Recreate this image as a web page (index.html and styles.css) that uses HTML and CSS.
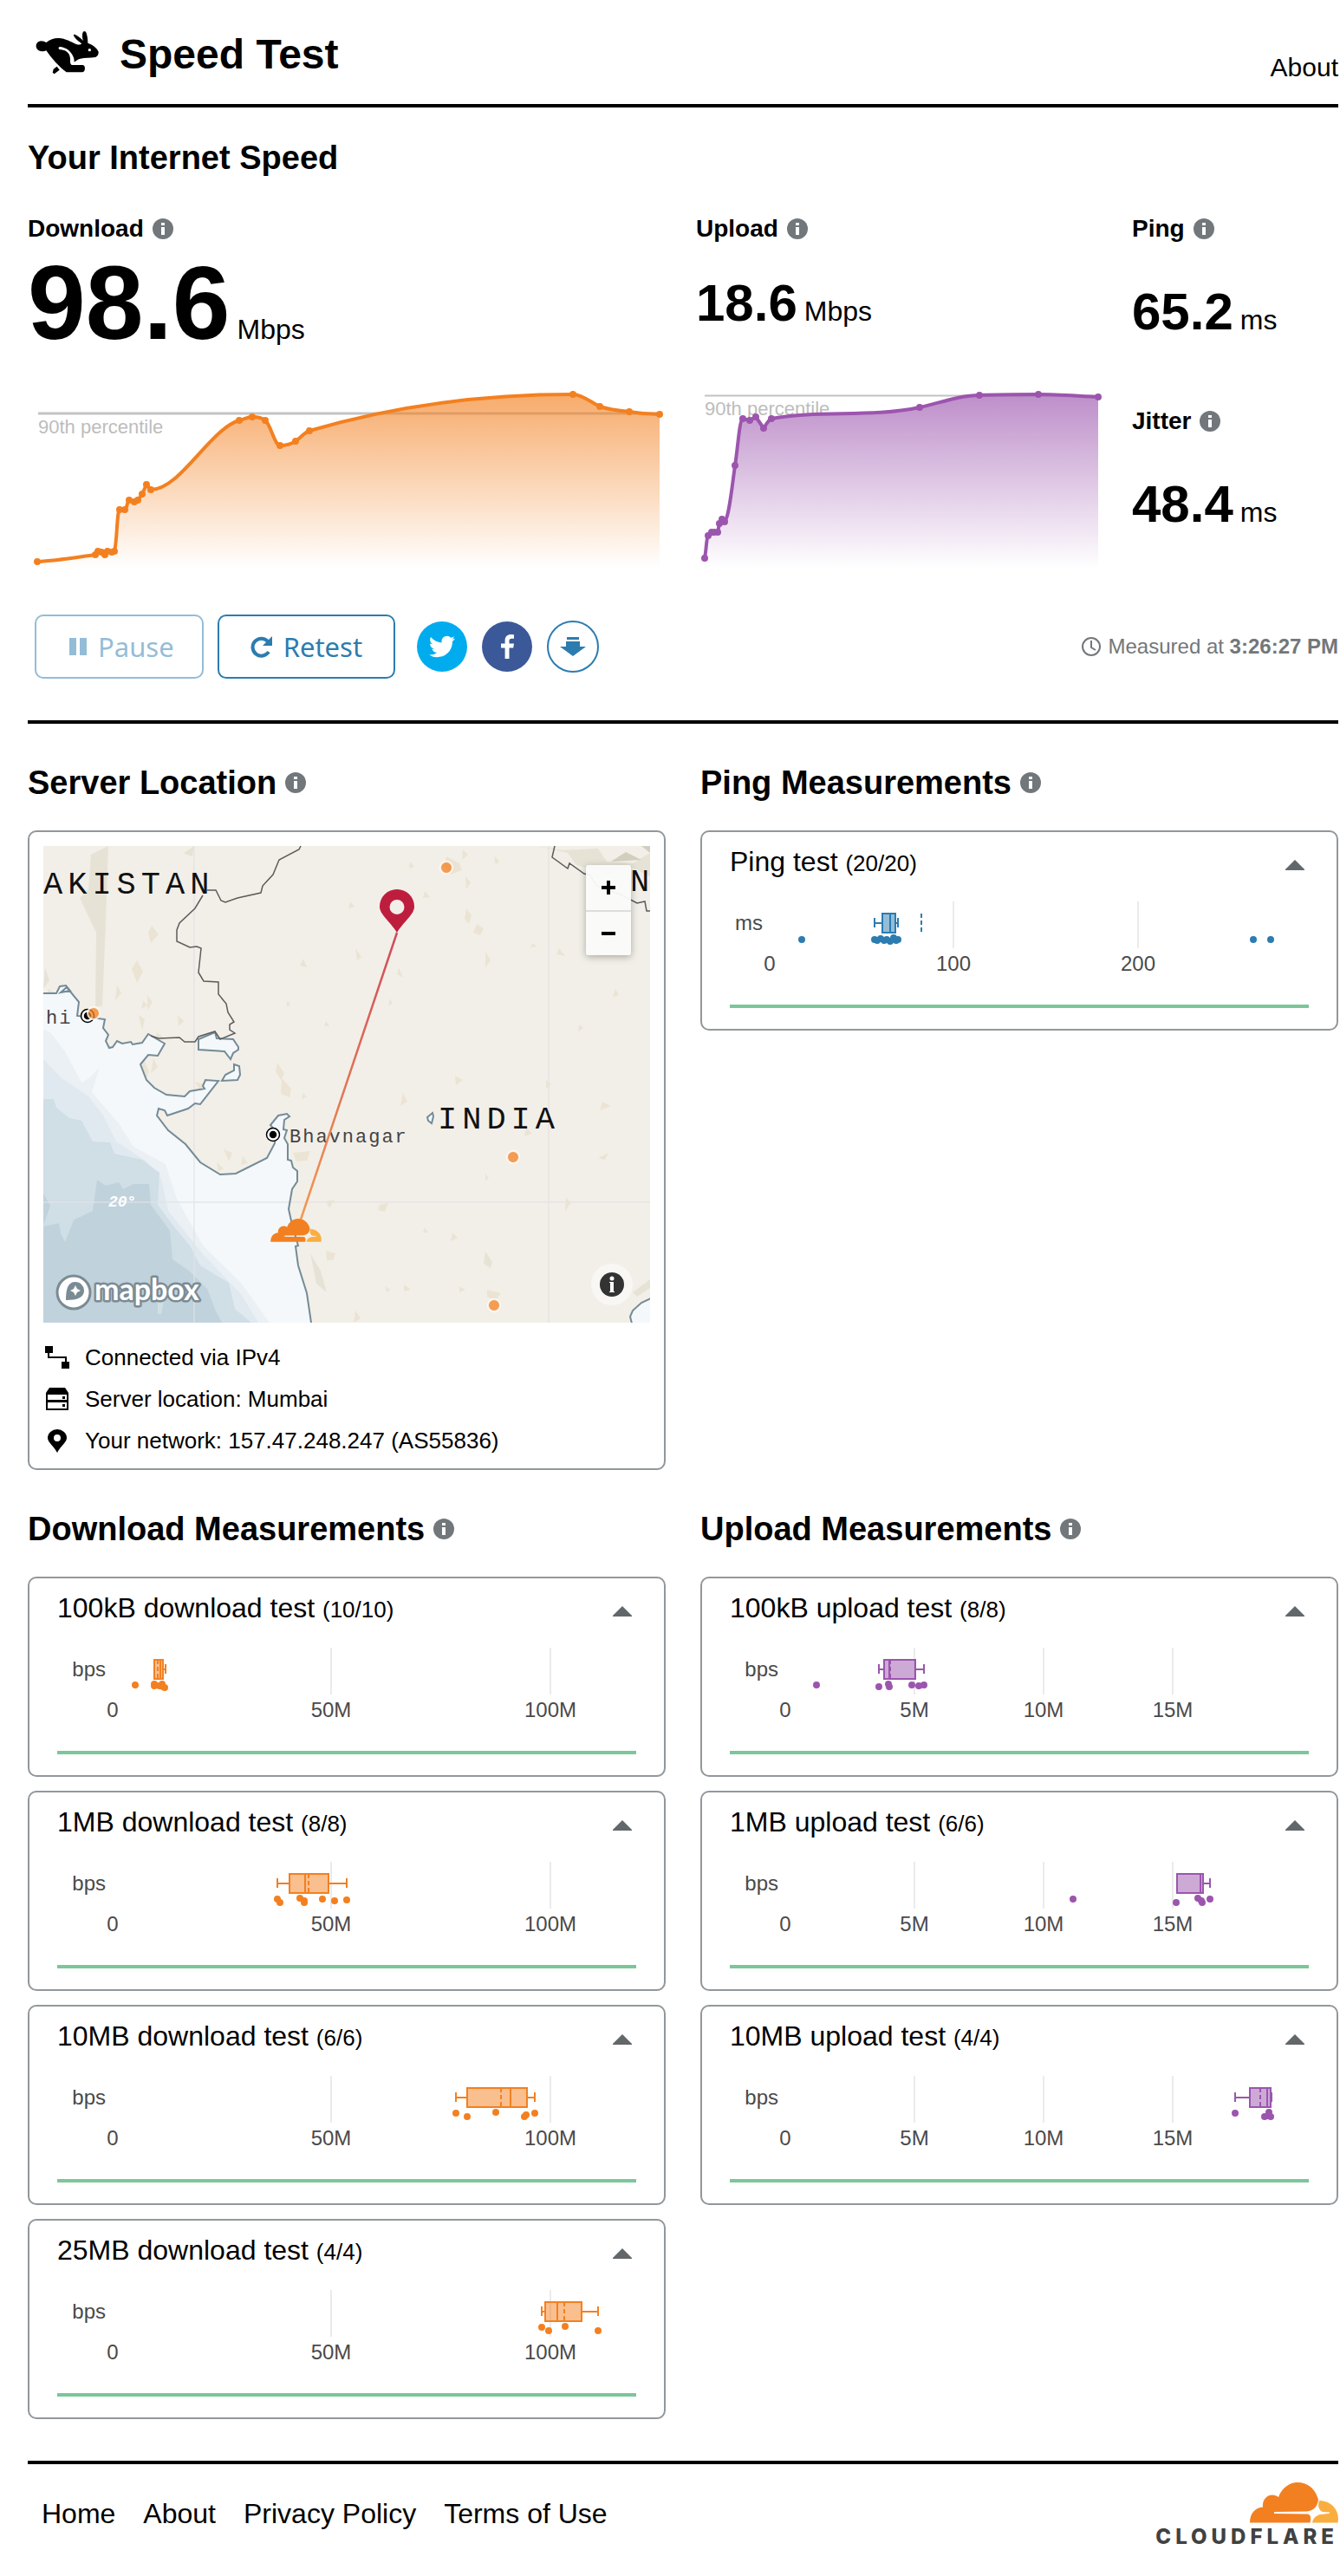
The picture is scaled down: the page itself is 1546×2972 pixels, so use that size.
FILE: index.html
```html
<!DOCTYPE html>
<html lang="en">
<head>
<meta charset="utf-8">
<meta name="viewport" content="width=device-width, initial-scale=1">
<title>Speed Test</title>
<link rel="stylesheet" href="styles.css">
</head>
<body>
<svg class="defs" aria-hidden="true">
  <symbol id="i-info" viewBox="0 0 24 24"><circle cx="12" cy="12" r="12" fill="#72777b"/><path d="M10 5h4v3h-4zM10 10h4v9h-4z" fill="#fff"/></symbol>
  <symbol id="i-up" viewBox="0 0 22 12"><path d="M11 0L22 11V12H0V11Z" fill="#62676a"/></symbol>
  <symbol id="i-cloud" viewBox="0 0 102 47">
    <path fill="#f38020" d="M0 46.500C0 36 6 29 15 28.500C14 21 19 14.600 26 14.600C29 14.600 31 15.500 33 17C37 6 46 0 55 0C66 0 75 7 78 17L79 20C78 27 75 32 66 33.500L28 34V36L66 36.500C70 37 71 40 69.500 46.500Z"/>
    <path fill="#faae40" d="M80 21C92 21 102 30 102 42L101.500 46.500H72C73 41 77 38 81 37L92 35.800V34.600L84 34C79 32 78 26 80 21Z"/>
  </symbol>
</svg>

<header class="header">
  <div class="brand">
    <svg class="rabbit" viewBox="0 0 252 180" aria-hidden="true">
      <path d="M34 49C42 49 48 52 52 54C66 42 82 38 96 39C118 40 138 52 156 60C164 63 171 62 175 58C163 50 150 38 147 30C146 26 150 25 154 28C164 33 174 42 180 48C176 36 176 22 180 17C184 13 189 16 191 22C195 34 196 46 196 56C214 62 226 72 232 84C235 92 231 102 222 105C204 108 186 106 170 110C160 113 154 118 149 122C150 104 138 86 122 76C112 70 98 66 95 71C93 76 98 79 104 79C122 81 134 92 135 110C135 120 134 130 142 132H178C186 133 188 144 184 152C182 156 178 157 174 157H122C96 138 70 108 52 82C44 86 34 86 26 82C12 74 14 50 34 49Z"/>
      <path d="M77 146L89 137L98 149L80 163L74 158Z"/><circle cx="202" cy="80" r="5" fill="#fff"/>
    </svg>
    <h1>Speed Test</h1>
  </div>
  <a class="about" href="#about">About</a>
</header>

<main>
<section class="overview">
  <h2>Your Internet Speed</h2>
  <div class="stats">
    <div class="stat">
      <h3>Download <button class="info" aria-label="About download speed"><svg><use href="#i-info"/></svg></button></h3>
      <p class="value value-xl"><strong>98.6</strong><span>Mbps</span></p>
      <svg class="trend" viewBox="0 0 771 210" role="img" aria-label="Download speed over time">
        <defs><linearGradient id="go" x1="0" y1="0" x2="0" y2="1"><stop offset="0" stop-color="#f38020" stop-opacity=".66"/><stop offset="1" stop-color="#f38020" stop-opacity="0"/></linearGradient></defs>
        <path d="M12 27H729" stroke="#c3c3c3" stroke-width="3"/>
        <text x="12" y="50">90th percentile</text>
        <path fill="url(#go)" d="M11 198C34 197 56 193 78 190L81 186L85 187L89 190L92 186L97 187L100 186L106 138L112 138L117 127L123 129L127 127L132 120L137 109L142 115C176 115 210 45 244 35C249 34 254 31 259 31C264 31 269 31 274 35C280 39 285 64 291 64C297 64 303 63 309 59C314 56 319 49 325 47C426 17 527 5 629 5C639 5 650 14 660 19C672 23 683 24 694 25C706 27 717 28 729 28V206H11Z"/>
        <path class="line orange" d="M11 198C34 197 56 193 78 190L81 186L85 187L89 190L92 186L97 187L100 186C103 176 103 138 106 138L112 138C115 136 115 127 117 127L123 129L127 127L132 120L137 109L142 115C176 115 210 45 244 35C249 34 254 31 259 31C264 31 269 31 274 35C280 39 285 64 291 64C297 64 303 63 309 59C314 56 319 49 325 47C426 17 527 5 629 5C639 5 650 14 660 19C672 23 683 24 694 25C706 27 717 28 729 28"/>
        <path class="points orange" d="M11 198h0M78 190h0M81 186h0M85 187h0M89 190h0M92 186h0M97 187h0M100 186h0M106 138h0M112 138h0M117 127h0M123 129h0M127 127h0M132 120h0M137 109h0M142 115h0M244 35h0M259 31h0M274 35h0M291 64h0M309 59h0M325 47h0M629 5h0M660 19h0M694 25h0M729 28h0"/>
      </svg>
    </div>
    <div class="stat">
      <h3>Upload <button class="info" aria-label="About upload speed"><svg><use href="#i-info"/></svg></button></h3>
      <p class="value value-up"><strong>18.6</strong><span>Mbps</span></p>
      <svg class="trend" viewBox="0 0 503 210" role="img" aria-label="Upload speed over time">
        <defs><linearGradient id="gp" x1="0" y1="0" x2="0" y2="1"><stop offset="0" stop-color="#9c55ae" stop-opacity=".66"/><stop offset="1" stop-color="#9c55ae" stop-opacity="0"/></linearGradient></defs>
        <path d="M10 6.500H464" stroke="#c3c3c3" stroke-width="2"/>
        <text x="10" y="29">90th percentile</text>
        <path fill="url(#gp)" d="M10 194L14 168L18 164H25L27 154L30 149L33 152C38 148 42 108 45 87C48 70 51 34 54 33L62 35L69 31L78 44L87 33C144 23 201 32 258 20C281 15 304 6 327 6C350 5 372 5 395 5C418 5 441 7 464 8V206H10Z"/>
        <path class="line purple" d="M10 194C12 184 12 170 14 168L18 164H25L27 154L30 149L33 152C38 148 42 108 45 87C48 70 50 34 54 33L62 35C65 35 66 31 69 31L78 44C81 40 83 35 87 33C144 23 201 32 258 20C281 15 304 6 327 6C350 5 372 5 395 5C418 5 441 7 464 8"/>
        <path class="points purple" d="M10 194h0M14 168h0M18 164h0M21 164h0M25 164h0M27 154h0M30 149h0M33 152h0M45 87h0M54 33h0M62 35h0M69 31h0M78 44h0M87 33h0M258 20h0M327 6h0M395 5h0M464 8h0"/>
      </svg>
    </div>
    <div class="stat">
      <h3>Ping <button class="info" aria-label="About ping"><svg><use href="#i-info"/></svg></button></h3>
      <p class="value value-ms"><strong>65.2</strong><span>ms</span></p>
      <h3 class="second">Jitter <button class="info" aria-label="About jitter"><svg><use href="#i-info"/></svg></button></h3>
      <p class="value value-ms"><strong>48.4</strong><span>ms</span></p>
    </div>
  </div>
  <div class="controls">
    <div class="tests">
      <button class="btn" disabled><svg class="ico-pause" viewBox="0 0 20 20"><path d="M0 0h8v20H0zM12 0h8v20h-8z" fill="currentColor"/></svg>Pause</button>
      <button class="btn btn-retest"><svg class="ico-retest" viewBox="0 0 25 25"><path d="M20 6A10 10 0 1 0 21 18" fill="none" stroke="currentColor" stroke-width="4"/><path d="M25 0V11H14Z" fill="currentColor"/></svg>Retest</button>
    </div>
    <div class="share">
      <a class="round twitter" href="#twitter" aria-label="Share on Twitter"><svg width="30" height="30" viewBox="0 0 24 24"><path fill="#fff" d="M23.953 4.570a10 10 0 01-2.825.775 4.958 4.958 0 002.163-2.723c-.951.555-2.005.959-3.127 1.184a4.920 4.920 0 00-8.384 4.482C7.690 8.095 4.067 6.130 1.640 3.162a4.822 4.822 0 00-.666 2.475c0 1.710.870 3.213 2.188 4.096a4.904 4.904 0 01-2.228-.616v.060a4.923 4.923 0 003.946 4.827 4.996 4.996 0 01-2.212.085 4.936 4.936 0 004.604 3.417 9.867 9.867 0 01-6.102 2.105c-.390 0-.779-.023-1.170-.067a13.995 13.995 0 007.557 2.209c9.053 0 13.998-7.496 13.998-13.985 0-.210 0-.420-.015-.630A9.935 9.935 0 0024 4.590z"/></svg></a>
      <a class="round facebook" href="#facebook" aria-label="Share on Facebook"><svg width="15" height="28" viewBox="0 0 15 28"><path fill="#fff" d="M9.500 28V15.500H14.200L15 10.400H9.500V7.600C9.500 5.800 10.200 4.800 12.400 4.800H15V.3C14.300.2 12.900 0 11.400 0 7.400 0 4.600 2.300 4.600 6.900V10.400H0V15.500H4.600V28Z"/></svg></a>
      <button class="round save" aria-label="Download results"><svg width="30" height="22" viewBox="0 0 30 22"><path fill="#2c7cb0" d="M8 0H22V3H8ZM7 5H23V11H30L15 22L0 11H7Z"/></svg></button>
    </div>
    <p class="measured"><svg width="24" height="24" viewBox="0 0 24 24" fill="none" stroke="#72777b" stroke-width="2"><circle cx="12" cy="12" r="10"/><path d="M12 5V13L17 16"/></svg><span>Measured at <strong>3:26:27 PM</strong></span></p>
  </div>
</section>

<div class="columns">
  <section>
    <h2>Server Location <button class="info" aria-label="About server location"><svg><use href="#i-info"/></svg></button></h2>
    <div class="card location">
      <div class="map">
        <svg class="map-art" viewBox="0 0 700 550" role="img" aria-label="Map from your network to Mumbai">
          <defs><linearGradient id="route" gradientUnits="userSpaceOnUse" x1="0" y1="100" x2="0" y2="431"><stop offset="0" stop-color="#cf4a5c"/><stop offset="1" stop-color="#f2994f"/></linearGradient></defs>
          <rect width="700" height="550" fill="#f2efe8"/>
          <g fill="#e6e3d6">
            <path d="M55 10L75 0L72 90L68 185H60L61 100L42 60L52 50Z"/><path d="M2 140L7 155L0 165ZM5 165L20 172L6 180ZM26 165L36 180L22 186ZM35 185L42 215L34 200ZM15 200L20 185L22 200Z"/>
            <path d="M570 0L600 5L640 3L650 18L680 20L700 8V35L680 25L650 33L615 22L605 8Z"/><path d="M655 18L672 7L690 16ZM690 0H700V8Z" fill="#d2cfbe"/>
            <path d="M308 470L320 490L327 515L315 505ZM510 468L518 480L516 487L508 482ZM680 515L700 500V510L685 520Z"/>
            <path d="M162 8L174 0L172 12L165 10Z"/>
          </g>
          <g fill="#ebe4d4">
            <path d="M125 92L133 102L124 112L121 100ZM108 132L115 145L108 158L102 142ZM105 250L115 245L122 260L115 280L108 265ZM110 195L117 200L114 213ZM85 160L90 170L83 178ZM115 178L120 184L113 188ZM130 215L138 220L132 228ZM155 195L162 202L156 208ZM127 245L132 255L124 262ZM120 172L126 180L120 190Z"/>
            <path d="M465 12L480 20L483 28L470 33L462 24ZM487 35L493 42L488 50ZM423 18L428 24L422 26ZM520 12L526 17L522 22ZM484 4L490 10L483 16ZM440 52L446 59L438 60ZM488 72L494 80L491 90L486 84ZM500 90L508 95L504 103L496 100ZM510 122L516 132L510 140ZM360 118L367 128L362 132ZM300 130L304 140L296 138ZM410 140L415 152L408 148ZM354 64L359 70L352 72ZM595 118L602 127L592 125ZM565 112L569 116L562 117Z"/>
            <path d="M270 250L278 262L274 270L268 260ZM275 268L286 280L284 290L274 286ZM175 272L187 275L182 285ZM415 285L420 295L412 300ZM475 265L484 270L476 276ZM660 165L664 172L657 174ZM618 206L623 210L617 214ZM580 270L586 275L580 280ZM645 295L655 300L642 305ZM557 325L564 332L555 335ZM288 354L308 352L304 363L292 364ZM510 378L514 383L510 386ZM388 414L398 412L394 422L386 420ZM326 410L336 408L330 418ZM603 405L608 412L602 422ZM326 467L337 470L334 478H327ZM472 446L478 452L470 456ZM440 440L444 446L438 446ZM512 512L528 516L522 524L512 520ZM360 536L366 545L358 550ZM480 508L487 512L480 515ZM395 508L400 512L396 515ZM416 506L424 512L416 514ZM208 350L218 354L214 364ZM230 358L236 366L228 368ZM200 365L208 372L202 376ZM640 360L652 354L648 362ZM300 285L304 290L298 292ZM282 178L285 184L280 185ZM400 176L403 182L398 184ZM326 202L330 208L324 208Z"/>
          </g>
          <path fill="#f4f8fb" d="M0 170L15 170L19 162L26 161L31 167L41 180L39 196L71 200L69 210L75 218L72 225L76 233L80 232L85 225L91 228L101 226L103 229L114 227L121 217L140 228L132 242L121 241L112 252L119 270L128 279L142 287L163 289L169 283L186 280L184 277L187 270L202 271L181 298L175 297L167 303L143 311L140 305L133 303L131 311L144 328L164 344L181 365L204 379L222 378L258 360L267 343L268 329L262 322L271 311L281 309L284 312L278 316L277 327L281 328L278 337L282 344V362L286 363L288 371L293 375V387L287 396L283 419L287 437L294 461L291 462L294 484L304 516L309 550H0Z"/>
          <path fill="#eaf0f4" d="M0 212L8 215L25 237L44 273L54 267L65 255L56 284L87 320L104 347L141 367L154 407L184 461L228 504L261 550H0Z"/>
          <path fill="#e0e9f0" d="M0 246L20 267L52 289L69 311L84 341L119 364L136 384L144 421L184 471L228 517L248 550H0Z"/>
          <path fill="#d0dee6" d="M0 292H12L15 302L30 314L44 317L57 341L77 342L82 355L114 362L134 377L132 414L149 437L169 461L181 484L214 504L221 534L240 550H0Z"/>
          <path fill="#c0d2dc" d="M0 439L34 432L57 421L62 385L72 392L87 388L92 396L104 390H122L124 414L146 444L149 477L169 491L189 511L199 537L206 550H0ZM0 401L8 415L0 438Z"/>
          <path fill="#d0dee6" d="M18 434L35 432L25 457L20 447ZM132 525H139L136 540H132Z"/>
          <path d="M174 0V550M583 0V550M0 411H700" stroke="#e2e4e4" stroke-width="1.500" opacity=".8"/>
          <g fill="#f4f8fb" stroke="#748b97" stroke-width="2">
            <path fill="none" d="M0 170L15 170L19 162L26 161L31 167L20 169L27 163L41 180L39 196L71 200L69 210L75 218L72 225L76 233L80 232L85 225L91 228L101 226L103 229L114 227L121 217L140 228L132 242L121 241L112 252L119 270L128 279L142 287L163 289L169 283L186 280L184 277L187 270L202 271L181 298L175 297L167 303L143 311L140 305L133 303L131 311L144 328L164 344L181 365L204 379L222 378L258 360L267 343L268 329L262 322L271 311L281 309L284 312L278 316L277 327L281 328L278 337L282 344V362L286 363L288 371L293 375V387L287 396L283 419L287 437L294 461L291 462L294 484L304 516L309 550"/>
            <path d="M179 223L198 215L200 222L219 223L225 232V235L219 239L216 246L209 237L179 235ZM220 252L226 254L227 264L224 270L206 271L210 264L220 259ZM443 313L449 308L450 312L448 320L444 317ZM701 522L690 527L680 536L677 543L679 551H701Z"/>
          </g>
          <path fill="none" stroke="#5c5c5c" stroke-width="1.500" d="M297 0L295 4L272 16L265 33L253 46L251 54L224 60L210 65L205 63L199 51H189M184 57L175 72L157 89L154 97V110L169 117L177 116L182 118L179 146L185 156L202 157V171L211 182L213 192L220 203L215 206V212L221 216L204 223L198 214L179 220L175 226H163L157 221L133 222L124 219M590 0L587 13L605 26L607 20L624 32L631 34L638 46L666 56L685 66L694 64L696 75H700"/>
          <g class="map-country"><text x="0" y="55">AKISTAN</text><text x="455" y="326">INDIA</text><text x="677" y="52">N</text></g>
          <g class="map-city"><text x="284" y="342">Bhavnagar</text><text x="3" y="205">hi</text></g>
          <text class="map-lat" x="75" y="416">20°</text>
          <g stroke="#000" stroke-width="1.500"><circle cx="51" cy="196" r="7.500" fill="#fff"/><circle cx="265" cy="333" r="7.500" fill="#fff"/><circle cx="51" cy="196" r="3.500"/><circle cx="265" cy="333" r="3.500"/></g>
          <g fill="#f38020" fill-opacity=".75" stroke="#fff" stroke-opacity=".8" stroke-width="2"><circle cx="465" cy="25" r="7"/><circle cx="58" cy="193" r="7"/><circle cx="542" cy="359" r="7"/><circle cx="520" cy="530" r="7"/></g>
          <path d="M408 100L297 431" stroke="url(#route)" stroke-width="2.500"/>
          <path fill="#be1e3e" fill-rule="evenodd" d="M408 100C400 87 388 79 388 70A20 20 0 0 1 428 70C428 79 416 87 408 100ZM408 62A8.500 8.500 0 1 0 408 79A8.500 8.500 0 1 0 408 62Z"/>
          <use href="#i-cloud" x="262" y="430" width="59" height="27"/>
          <circle cx="35" cy="515" r="19" fill="#fff" stroke="#7b8b94" stroke-width="3"/>
          <path d="M26 524C26 508 30 503 37 503C43 503 47 508 47 513C47 521 39 524 26 524Z" fill="#7b8b94"/><path d="M37 507L39 511L43 513L39 515L37 519L35 515L31 513L35 511Z" fill="#fff"/>
          <text class="map-logo" x="59" y="524">mapbox</text>
        </svg>
        <div class="zoom"><button aria-label="Zoom in"><svg viewBox="0 0 16 16"><path d="M6 0h4v6h6v4h-6v6H6v-6H0V6h6z"/></svg></button><button aria-label="Zoom out"><svg viewBox="0 0 16 16"><path d="M0 6h16v4H0z"/></svg></button></div>
        <button class="credits" aria-label="Map credits"><svg viewBox="0 0 28 28"><circle cx="14" cy="14" r="14" fill="#333"/><circle cx="14" cy="7" r="2.500" fill="#fff"/><path d="M11 11h5v11h1v1h-6v-1h1v-10h-1z" fill="#fff"/></svg></button>
      </div>
      <ul class="facts">
        <li><svg viewBox="0 0 28 28"><path d="M0 1H9V9H0ZM19 19H28V27H19Z"/><path d="M4 8V14H24V20" fill="none" stroke="#000" stroke-width="2"/></svg>Connected via IPv4</li>
        <li><svg viewBox="0 0 28 28"><path d="M5 1H23L27 7V8H1V7Z"/><path d="M2 8H26V16H2ZM2 17H26V26H2Z" fill="none" stroke="#000" stroke-width="2"/><path d="M20 11h3v3h-3zM20 20h3v3h-3z"/></svg>Server location: Mumbai</li>
        <li><svg viewBox="0 0 28 28"><path fill-rule="evenodd" d="M14 28C10 20 3 16 3 11A11 10 0 0 1 25 11C25 16 18 20 14 28ZM14 7A4 4 0 1 0 14 15A4 4 0 1 0 14 7Z"/></svg>Your network: 157.47.248.247 (AS55836)</li>
      </ul>
    </div>
  </section>

  <section>
    <h2>Ping Measurements <button class="info" aria-label="About ping measurements"><svg><use href="#i-info"/></svg></button></h2>
    <article class="card test blue">
      <div class="test-head"><h3>Ping test <small>(20/20)</small></h3><button class="toggle" aria-label="Collapse"><svg><use href="#i-up"/></svg></button></div>
      <svg class="box" viewBox="0 0 668 92" role="img" aria-label="Ping box plot">
        <path class="gridline" d="M258 4V58M471 4V58"/><text x="38" y="37" text-anchor="end">ms</text>
        <g text-anchor="middle"><text x="46" y="84">0</text><text x="258" y="84">100</text><text x="471" y="84">200</text></g>
        <rect x="176" y="18" width="15" height="22"/><path class="rule" d="M167 23V34M167 29H176M191 29H194M194 23V34M185 18V40"/><path class="mean" d="M221 18V40"/>
        <path class="dots" d="M83 48h0M167 48h0M170 49h0M174 47h0M178 49h0M181 48h0M185 50h0M189 46h0M192 49h0M194 48h0M604 48h0M624 48h0"/>
      </svg>
      <div class="done"></div>
    </article>
  </section>
</div>

<div class="columns">
  <section>
    <h2>Download Measurements <button class="info" aria-label="About download measurements"><svg><use href="#i-info"/></svg></button></h2>
    <div class="stack">
    <article class="card test tangerine">
      <div class="test-head"><h3>100kB download test <small>(10/10)</small></h3><button class="toggle" aria-label="Collapse"><svg><use href="#i-up"/></svg></button></div>
      <svg class="box" viewBox="0 0 668 92" role="img" aria-label="100kB download box plot">
        <path class="gridline" d="M316 4V58M569 4V58"/><text x="56" y="37" text-anchor="end">bps</text>
        <g text-anchor="middle"><text x="64" y="84">0</text><text x="316" y="84">50M</text><text x="569" y="84">100M</text></g>
        <rect x="112" y="18" width="10" height="22"/><path class="rule" d="M119 18V40M122 29H125M125 23V34"/><path class="mean" d="M116 18V40"/>
        <path class="dots" d="M90 47h0M112 46h0M112 48h0M118 48h0M121 46h0M122 49h0M124 50h0"/></svg>
      <div class="done"></div>
    </article>
    <article class="card test tangerine">
      <div class="test-head"><h3>1MB download test <small>(8/8)</small></h3><button class="toggle" aria-label="Collapse"><svg><use href="#i-up"/></svg></button></div>
      <svg class="box" viewBox="0 0 668 92" role="img" aria-label="1MB download box plot">
        <path class="gridline" d="M316 4V58M569 4V58"/><text x="56" y="37" text-anchor="end">bps</text>
        <g text-anchor="middle"><text x="64" y="84">0</text><text x="316" y="84">50M</text><text x="569" y="84">100M</text></g>
        <rect x="268" y="18" width="45" height="22"/><path class="rule" d="M254 23V34M254 29H268M286 18V40M313 29H334M334 23V34"/><path class="mean" d="M290 18V40"/>
        <path class="dots" d="M254 47h0M257 51h0M280 46h0M285 51h0M285 49h0M306 47h0M320 49h0M334 48h0"/></svg>
      <div class="done"></div>
    </article>
    <article class="card test tangerine">
      <div class="test-head"><h3>10MB download test <small>(6/6)</small></h3><button class="toggle" aria-label="Collapse"><svg><use href="#i-up"/></svg></button></div>
      <svg class="box" viewBox="0 0 668 92" role="img" aria-label="10MB download box plot">
        <path class="gridline" d="M316 4V58M569 4V58"/><text x="56" y="37" text-anchor="end">bps</text>
        <g text-anchor="middle"><text x="64" y="84">0</text><text x="316" y="84">50M</text><text x="569" y="84">100M</text></g>
        <rect x="473" y="18" width="69" height="22"/><path class="rule" d="M460 23V34M460 29H473M523 18V40M542 29H551M551 23V34"/><path class="mean" d="M512 18V40"/>
        <path class="dots" d="M460 47h0M473 51h0M506 46h0M539 51h0M541 49h0M551 47h0"/></svg>
      <div class="done"></div>
    </article>
    <article class="card test tangerine">
      <div class="test-head"><h3>25MB download test <small>(4/4)</small></h3><button class="toggle" aria-label="Collapse"><svg><use href="#i-up"/></svg></button></div>
      <svg class="box" viewBox="0 0 668 92" role="img" aria-label="25MB download box plot">
        <path class="gridline" d="M316 4V58M569 4V58"/><text x="56" y="37" text-anchor="end">bps</text>
        <g text-anchor="middle"><text x="64" y="84">0</text><text x="316" y="84">50M</text><text x="569" y="84">100M</text></g>
        <rect x="563" y="18" width="42" height="22"/><path class="rule" d="M559 23V34M559 29H563M577 18V40M605 29H624M624 23V34"/><path class="mean" d="M585 18V40"/>
        <path class="dots" d="M559 47h0M567 51h0M586 46h0M624 51h0"/></svg>
      <div class="done"></div>
    </article>
    </div>
  </section>

  <section>
    <h2>Upload Measurements <button class="info" aria-label="About upload measurements"><svg><use href="#i-info"/></svg></button></h2>
    <div class="stack">
    <article class="card test violet">
      <div class="test-head"><h3>100kB upload test <small>(8/8)</small></h3><button class="toggle" aria-label="Collapse"><svg><use href="#i-up"/></svg></button></div>
      <svg class="box" viewBox="0 0 668 92" role="img" aria-label="100kB upload box plot">
        <path class="gridline" d="M213 4V58M362 4V58M511 4V58"/><text x="56" y="37" text-anchor="end">bps</text>
        <g text-anchor="middle"><text x="64" y="84">0</text><text x="213" y="84">5M</text><text x="362" y="84">10M</text><text x="511" y="84">15M</text></g>
        <rect x="178" y="18" width="36" height="22"/><path class="rule" d="M172 23V34M172 29H178M184 18V40M214 29H224M224 23V34"/><path class="mean" d="M185 18V40"/>
        <path class="dots" d="M100 47h0M172 49h0M183 46h0M184 49h0M210 47h0M218 48h0M224 47h0"/></svg>
      <div class="done"></div>
    </article>
    <article class="card test violet">
      <div class="test-head"><h3>1MB upload test <small>(6/6)</small></h3><button class="toggle" aria-label="Collapse"><svg><use href="#i-up"/></svg></button></div>
      <svg class="box" viewBox="0 0 668 92" role="img" aria-label="1MB upload box plot">
        <path class="gridline" d="M213 4V58M362 4V58M511 4V58"/><text x="56" y="37" text-anchor="end">bps</text>
        <g text-anchor="middle"><text x="64" y="84">0</text><text x="213" y="84">5M</text><text x="362" y="84">10M</text><text x="511" y="84">15M</text></g>
        <rect x="516" y="18" width="30" height="22"/><path class="rule" d="M543 18V40M546 29H554M554 23V34"/><path class="mean" d="M516 18V40"/>
        <path class="dots" d="M396 47h0M515 51h0M540 46h0M544 49h0M545 51h0M554 47h0"/></svg>
      <div class="done"></div>
    </article>
    <article class="card test violet">
      <div class="test-head"><h3>10MB upload test <small>(4/4)</small></h3><button class="toggle" aria-label="Collapse"><svg><use href="#i-up"/></svg></button></div>
      <svg class="box" viewBox="0 0 668 92" role="img" aria-label="10MB upload box plot">
        <path class="gridline" d="M213 4V58M362 4V58M511 4V58"/><text x="56" y="37" text-anchor="end">bps</text>
        <g text-anchor="middle"><text x="64" y="84">0</text><text x="213" y="84">5M</text><text x="362" y="84">10M</text><text x="511" y="84">15M</text></g>
        <rect x="600" y="18" width="24" height="22"/><path class="rule" d="M583 23V34M583 29H600M620 18V40M625 23V34"/><path class="mean" d="M612 18V40"/>
        <path class="dots" d="M583 47h0M617 51h0M622 46h0M624 51h0"/></svg>
      <div class="done"></div>
    </article>
    </div>
  </section>
</div>
</main>

<footer class="footer">
  <nav><a href="#home">Home</a><a href="#about">About</a><a href="#privacy">Privacy Policy</a><a href="#terms">Terms of Use</a></nav>
  <a class="logo" href="#cloudflare"><svg width="102" height="47"><use href="#i-cloud"/></svg><span>CLOUDFLARE</span></a>
</footer>
</body>
</html>
```
FILE: styles.css
```css
* { box-sizing: border-box; }

body {
  margin: 0;
  padding: 0 2px 0 32px;
  background: #fff;
  color: #000;
  font-family: "Liberation Sans", Arial, sans-serif;
}

h1, h2, h3, p, ul { margin: 0; padding: 0; }
a { color: inherit; text-decoration: none; }
button { margin: 0; padding: 0; border: 0; background: none; color: inherit; font: inherit; cursor: pointer; }
svg { display: block; flex: none; }
.defs { position: absolute; width: 0; height: 0; }

/* Header */
.header {
  display: flex;
  justify-content: space-between;
  align-items: flex-end;
  padding: 31px 0 25px;
  border-bottom: 4px solid #000;
}
.brand { display: flex; gap: 18px; padding-left: 4px; }
.rabbit { width: 84px; height: 60px; }
h1 { font-size: 48px; line-height: 64px; }
.about { font-size: 30px; line-height: 34px; }

/* Headings */
h2 { display: flex; align-items: center; gap: 10px; margin-bottom: 32px; font-size: 38px; line-height: 46px; }
h3 { display: flex; align-items: center; gap: 10px; font-size: 28px; line-height: 32px; }
.info, .info svg { display: block; width: 24px; height: 24px; }

/* Overview */
.overview { padding: 35px 0 48px; border-bottom: 4px solid #000; }
.overview h2 { margin-bottom: 43px; }
.stats { display: grid; grid-template-columns: 771fr 503fr 238fr; }
.stat { display: flex; flex-direction: column; }
.value { display: flex; align-items: baseline; gap: 8px; font-size: 32px; line-height: 36px; }
.value strong { font-size: 60px; line-height: 68px; }
.value-xl { margin-top: 9px; margin-bottom: 41px; }
.value-xl strong { font-size: 120px; line-height: 120px; }
.value-up { margin-top: 36px; }
.value-ms { margin-top: 46px; }
.second { margin-top: 76px; }
.trend { width: 100%; height: auto; margin-top: auto; overflow: visible; }
.trend text { font-size: 22px; fill: #bdbdbd; }
.line { fill: none; stroke-width: 4; stroke-linejoin: round; }
.points { fill: none; stroke-width: 8; stroke-linecap: round; }
.orange { stroke: #f38020; }
.purple { stroke: #9c55ae; }

.controls { display: flex; align-items: center; margin-top: 49px; padding-left: 8px; }
.tests { display: flex; gap: 16px; }
.btn {
  display: flex;
  align-items: center;
  justify-content: center;
  gap: 13px;
  height: 74px;
  padding: 0 32px;
  border: 2px solid #2c7cb0;
  border-radius: 10px;
  color: #2c7cb0;
  font-family: "Noto Sans", "Open Sans", sans-serif;
  font-size: 31px;
}
.btn:disabled { opacity: .5; cursor: default; }
.btn-retest { padding: 0 36px; }
.ico-pause { width: 20px; height: 20px; margin-left: 6px; }
.ico-retest { width: 25px; height: 25px; }
.share { display: flex; align-items: center; gap: 17px; margin-left: 25px; }
.round { display: flex; align-items: center; justify-content: center; width: 58px; height: 58px; border-radius: 50%; }
.twitter { background: #00acee; }
.facebook { background: #3b5998; }
.save { width: 60px; height: 60px; border: 2px solid #2c7cb0; }
.measured { display: flex; align-items: center; gap: 8px; margin-left: auto; color: #72777b; font-size: 24px; line-height: 28px; }

/* Cards */
.columns { display: grid; grid-template-columns: 1fr 1fr; gap: 40px; align-items: start; padding-top: 45px; }
.stack { display: grid; gap: 16px; }
.card { border: 2px solid #92979b; border-radius: 10px; }

.location { padding: 16px 16px 8px; }
.map { position: relative; overflow: hidden; }
.map-art { width: 100%; height: auto; }
.map-country { font-family: "Liberation Mono", monospace; font-size: 37px; letter-spacing: 6px; fill: #111; }
.map-city { font-family: "Liberation Mono", monospace; font-size: 22px; letter-spacing: 2px; fill: #444; }
.map-lat { font-family: "Liberation Mono", monospace; font-style: italic; font-weight: 700; font-size: 18px; fill: #fff; }
.map-logo { font-family: Lato, sans-serif; font-weight: 700; font-size: 34px; fill: #fff; stroke: #7b8b94; stroke-width: 5px; stroke-linejoin: round; paint-order: stroke; }
.zoom { position: absolute; top: 22px; right: 22px; width: 52px; border-radius: 3px; background: rgba(250, 250, 250, .96); box-shadow: 0 2px 8px rgba(0, 0, 0, .3); }
.zoom button { display: flex; align-items: center; justify-content: center; width: 100%; height: 52px; }
.zoom button + button { border-top: 2px solid #ddd; }
.zoom svg { width: 16px; height: 16px; }
.credits { position: absolute; right: 20px; bottom: 20px; display: flex; align-items: center; justify-content: center; width: 48px; height: 48px; border-radius: 50%; background: rgba(255, 255, 255, .5); }
.credits svg { width: 28px; height: 28px; }

.facts { padding: 16px 0 0 2px; list-style: none; font-size: 26px; line-height: 48px; }
.facts li { display: flex; align-items: center; gap: 18px; }
.facts svg { width: 28px; height: 28px; }

.test { padding: 16px 32px 24px; }
.test-head { display: flex; justify-content: space-between; align-items: flex-end; margin-bottom: 24px; }
.test-head h3 { display: block; font-size: 32px; font-weight: 400; line-height: 36px; }
.test-head small { font-size: 26px; line-height: 26px; }
.toggle { display: flex; align-items: center; height: 28px; margin-right: 5px; }
.toggle svg { width: 22px; height: 12px; }
.box { width: 100%; height: auto; margin-bottom: 31px; }
.box text { font-size: 24px; fill: #4a4a4a; }
.gridline { stroke: #ebebeb; stroke-width: 2; }
.box rect { fill: currentColor; fill-opacity: .5; stroke: currentColor; stroke-width: 2; }
.rule { fill: none; stroke: currentColor; stroke-width: 2; }
.mean { fill: none; stroke: currentColor; stroke-width: 2; stroke-dasharray: 5 3; }
.dots { stroke: currentColor; stroke-width: 8; stroke-linecap: round; }
.blue .box { color: #2c7cb0; }
.tangerine .box { color: #f38020; }
.violet .box { color: #9c55ae; }
.done { height: 4px; background: #7bc69a; }

/* Footer */
.footer { display: flex; justify-content: space-between; align-items: flex-start; margin-top: 48px; padding: 21px 0 29px; border-top: 4px solid #000; }
.footer nav { display: flex; flex-wrap: wrap; gap: 32px; padding: 18px 0 0 16px; font-size: 32px; line-height: 36px; }
.logo { display: flex; flex-direction: column; align-items: flex-end; color: #404242; font-family: Inter, sans-serif; font-size: 24px; font-weight: 800; line-height: 32px; }
.logo span { letter-spacing: 5px; }
```
